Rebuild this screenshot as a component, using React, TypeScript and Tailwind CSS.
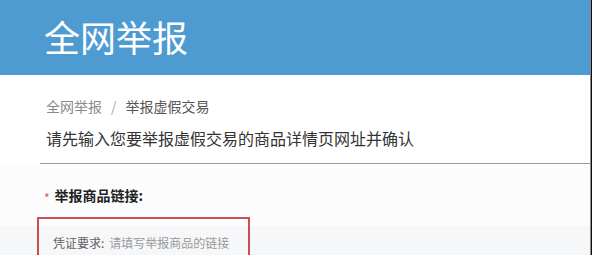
import React from "react";

export default function App() {
  const font = { fontFamily: '"Noto Sans CJK SC", "Noto Sans", sans-serif' };
  return (
    <div className="w-[592px] h-[255px] overflow-hidden flex bg-white" style={font}>
      <div className="flex-1 flex flex-col min-w-0">
        <div className="h-[75px] bg-[#4e9bd1] pl-[44px] pt-[14px] shrink-0">
          <div className="text-[36px] leading-[44px] text-white">全网举报</div>
        </div>
        <div className="bg-white pt-[21px] pl-[46px]">
          <div className="flex items-center text-[14px] leading-[20px]">
            <span className="text-[#8a8a8a]">全网举报</span>
            <span className="text-[#aaaaaa] mx-[9px]">/</span>
            <span className="text-[#555555]">举报虚假交易</span>
          </div>
          <div className="mt-[10px] text-[16px] leading-[24px] text-[#333333] pb-[13px]">
            请先输入您要举报虚假交易的商品详情页网址并确认
          </div>
        </div>
        <div className="ml-[40px] h-[1px] bg-[#9a9a9a] shrink-0" />
        <div className="flex-1 bg-[#fcfcfd] flex flex-col">
          <div className="pl-[44px] pt-[21px] flex items-start text-[14px] leading-[20px]">
            <span className="text-[#e0524f] text-[12px] leading-none mt-[7px] mr-[5px]">*</span>
            <span className="font-bold text-[#222222]">举报商品链接:</span>
          </div>
          <div className="flex-1 mt-[12px] pl-[37px] bg-[linear-gradient(to_bottom,#fcfcfd_9px,#f6f7f9_9px)]">
            <div className="w-[213px] h-[44px] border-2 border-[#c9504e] pl-[14px] pt-[16px] text-[12px] leading-[16px] whitespace-nowrap">
              <span className="text-[#606060]">凭证要求:</span>
              <span className="text-[#9a9a9a] ml-[5px]">请填写举报商品的链接</span>
            </div>
          </div>
        </div>
      </div>
      <div className="w-[1px] bg-[#8a8a8a] shrink-0" />
      <div className="w-[1px] bg-[#111111] shrink-0" />
    </div>
  );
}
